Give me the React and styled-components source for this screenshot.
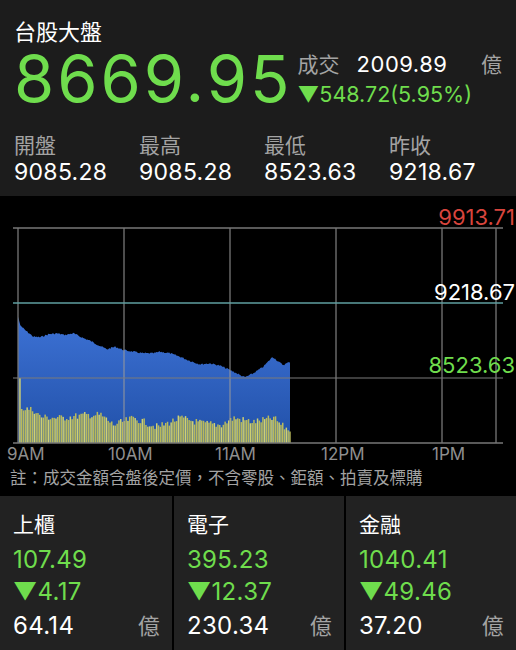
import React from "react";
import styled, { createGlobalStyle } from "styled-components";

const GREEN = "#6fdd4d";
const GRAY = "#a3a3a3";
const RED = "#d8453d";

const GlobalStyle = createGlobalStyle`
  body {
    margin: 0;
    background: #000;
    font-family: Inter, "Liberation Sans", "Noto Sans CJK TC", sans-serif;
  }
`;

const Page = styled.div`
  width: 516px;
  height: 650px;
  display: flex;
  flex-direction: column;
  background: #000;
  overflow: hidden;
`;

const Header = styled.div`
  height: 196px;
  box-sizing: border-box;
  padding: 16px 14px 0 14px;
  background: #1c1c1c;
  display: flex;
  flex-direction: column;
`;

const Title = styled.div`
  font-size: 22px;
  line-height: 28px;
  color: #fff;
  font-family: "Noto Sans CJK TC", sans-serif;
`;

const MainRow = styled.div`
  display: flex;
  align-items: flex-start;
  margin-top: 2px;
`;

const BigPrice = styled.div`
  font-size: 65px;
  line-height: 66px;
  color: ${GREEN};
  letter-spacing: 3px;
`;

const SideInfo = styled.div`
  flex: 1;
  display: flex;
  flex-direction: column;
  margin-left: 5px;
  padding-top: 2px;
`;

const TradeRow = styled.div`
  display: flex;
  align-items: baseline;
  line-height: 30px;
`;

const Label = styled.span`
  font-family: "Noto Sans CJK TC", sans-serif;
  font-size: ${({ size }) => size || 21}px;
  color: ${GRAY};
`;

const TradeValue = styled.span`
  flex: 1;
  margin-left: 17px;
  font-size: 22px;
  letter-spacing: 0.5px;
  color: #fff;
`;

const Change = styled.div`
  font-size: 21.5px;
  line-height: 30px;
  color: ${GREEN};
`;

const StatsGrid = styled.div`
  display: grid;
  grid-template-columns: repeat(4, 125px);
  margin-top: 18px;
`;

const Stat = styled.div`
  display: flex;
  flex-direction: column;
`;

const StatLabel = styled.div`
  font-family: "Noto Sans CJK TC", sans-serif;
  font-size: 21px;
  line-height: 28px;
  color: ${GRAY};
`;

const StatValue = styled.div`
  font-size: 23px;
  line-height: 28px;
  letter-spacing: 0.3px;
  color: #fff;
`;

const ChartSection = styled.div`
  height: 298px;
  display: flex;
  flex-direction: column;
  background: #000;
`;

const Note = styled.div`
  padding: 3px 0 0 10px;
  font-family: "Noto Sans CJK TC", sans-serif;
  font-size: 16.5px;
  line-height: 20px;
  color: ${GRAY};
`;

const Cards = styled.div`
  flex: 1;
  display: grid;
  grid-template-columns: 172px 1fr 1fr;
  gap: 2px;
  margin-top: 2px;
`;

const Card = styled.div`
  background: #222;
  padding: 11px 12px 0 13px;
  display: flex;
  flex-direction: column;
`;

const CardTitle = styled.div`
  font-family: "Noto Sans CJK TC", sans-serif;
  font-size: 21px;
  line-height: 33px;
  margin-bottom: 4px;
  color: #fff;
`;

const CardLine = styled.div`
  display: flex;
  justify-content: space-between;
  align-items: baseline;
  font-size: 24px;
  line-height: 32px;
  letter-spacing: 0.3px;
  color: ${({ green }) => (green ? GREEN : "#fff")};
`;

// ---- chart data ----
const TOP = 196;
const BASE = 443;

let seed = 7;
const rand = () => {
  seed = (seed * 9301 + 49297) % 233280;
  return seed / 233280;
};

const interp = (keys, x) => {
  for (let i = 0; i < keys.length - 1; i++) {
    const [x0, y0] = keys[i];
    const [x1, y1] = keys[i + 1];
    if (x >= x0 && x <= x1) return y0 + ((y1 - y0) * (x - x0)) / (x1 - x0);
  }
  return keys[keys.length - 1][1];
};

const priceKeys = [
  [18.3, 316.7], [20, 325], [25, 330], [33.3, 336.7], [40, 337.3], [48.3, 334.3],
  [56.7, 333.3], [65, 335], [73.3, 333.3], [81.7, 337.3], [90, 340.7], [98.3, 345],
  [106.7, 349.3], [115, 346.7], [123.3, 350], [133.3, 351.7], [143.3, 353.3],
  [153.3, 353.3], [160, 351.7], [170, 353.3], [180, 356.7], [190, 361], [200, 364.3],
  [210, 363.3], [220, 365.7], [230, 370], [240, 375], [245, 377.3], [253.3, 373.3],
  [263.3, 366.7], [272.7, 356.7], [278.3, 361.7], [283.3, 365], [290, 361.7],
];

const volKeys = [
  [20, 408], [33, 410], [40, 417], [60, 418], [85, 415], [100, 415], [113, 425],
  [133, 418], [157, 427], [180, 418], [200, 423], [220, 425], [233, 418], [253, 422],
  [273, 418], [283, 427], [290, 430],
];

const pricePoints = [];
for (let x = 18.3; x <= 290; x += 1) {
  const jitter = x < 21 ? 0 : (rand() - 0.5) * 1.6;
  pricePoints.push([x, interp(priceKeys, x) + jitter - TOP]);
}
pricePoints.push([290, interp(priceKeys, 290) - TOP]);
const areaPath =
  `M18.3 ${BASE - TOP} ` +
  pricePoints.map(([x, y]) => `L${x.toFixed(1)} ${y.toFixed(1)}`).join(" ") +
  ` L290 ${BASE - TOP} Z`;

const bars = [];
for (let x = 19.2; x < 289.5; x += 1.8) {
  const top = x < 20 ? 378 : interp(volKeys, x) + (rand() - 0.5) * 7;
  bars.push({ x, y: top - TOP, h: BASE - top });
}

const hours = [
  { x: 18, label: "9AM", lx: 7 },
  { x: 124, label: "10AM", lx: 108 },
  { x: 230, label: "11AM", lx: 215 },
  { x: 336, label: "12PM", lx: 321 },
  { x: 442, label: "1PM", lx: 432 },
];

const Chart = () => (
  <svg width="516" height="268" viewBox="0 0 516 268" style={{ display: "block" }}>
    <defs>
      <linearGradient id="area" x1="0" y1="0" x2="0" y2="1">
        <stop offset="0" stopColor="#3d72d5" />
        <stop offset="1" stopColor="#2150a8" />
      </linearGradient>
    </defs>
    <path d={areaPath} fill="url(#area)" />
    {bars.map((b, i) => (
      <rect key={i} x={b.x} y={b.y} width="1.5" height={b.h} fill={i % 4 === 0 ? "#cfd074" : "#b9ba5c"} />
    ))}
    {[...hours.map((h) => h.x), 496].map((x) => (
      <line key={x} x1={x} x2={x} y1={32} y2={BASE - TOP} stroke="#9a9a9a" strokeWidth="1" />
    ))}
    <line x1="13" x2="503" y1="32" y2="32" stroke="#777" strokeWidth="1.5" />
    <line x1="13" x2="503" y1="107" y2="107" stroke="#5f9fa0" strokeWidth="1.5" />
    <line x1="13" x2="503" y1="182" y2="182" stroke="#7a7a7a" strokeWidth="1" />
    <line x1="13" x2="503" y1={BASE - TOP} y2={BASE - TOP} stroke="#777" strokeWidth="1.5" />
    <g fontFamily="Inter, 'Liberation Sans', sans-serif" fontSize="22" textAnchor="end">
      <text x="515" y="29" fill={RED}>9913.71</text>
      <text x="515" y="104" fill="#fff">9218.67</text>
      <text x="515" y="177" fill={GREEN}>8523.63</text>
    </g>
    <g fontFamily="Inter, 'Liberation Sans', sans-serif" fontSize="17" fill="#8f8f8f">
      {hours.map((h) => (
        <text key={h.label} x={h.lx} y="264">{h.label}</text>
      ))}
    </g>
  </svg>
);

const stats = [
  { label: "開盤", value: "9085.28" },
  { label: "最高", value: "9085.28" },
  { label: "最低", value: "8523.63" },
  { label: "昨收", value: "9218.67" },
];

const sectors = [
  { name: "上櫃", price: "107.49", change: "4.17", volume: "64.14" },
  { name: "電子", price: "395.23", change: "12.37", volume: "230.34" },
  { name: "金融", price: "1040.41", change: "49.46", volume: "37.20" },
];

export default function App() {
  return (
    <Page>
      <GlobalStyle />
      <Header>
        <Title>台股大盤</Title>
        <MainRow>
          <BigPrice>8669.95</BigPrice>
          <SideInfo>
            <TradeRow>
              <Label>成交</Label>
              <TradeValue>2009.89</TradeValue>
              <Label>億</Label>
            </TradeRow>
            <Change>▼548.72(5.95%)</Change>
          </SideInfo>
        </MainRow>
        <StatsGrid>
          {stats.map((s) => (
            <Stat key={s.label}>
              <StatLabel>{s.label}</StatLabel>
              <StatValue>{s.value}</StatValue>
            </Stat>
          ))}
        </StatsGrid>
      </Header>
      <ChartSection>
        <Chart />
        <Note>註：成交金額含盤後定價，不含零股、鉅額、拍賣及標購</Note>
      </ChartSection>
      <Cards>
        {sectors.map((s) => (
          <Card key={s.name}>
            <CardTitle>{s.name}</CardTitle>
            <CardLine green>{s.price}</CardLine>
            <CardLine green>▼{s.change}</CardLine>
            <CardLine>
              {s.volume}
              <Label size={22}>億</Label>
            </CardLine>
          </Card>
        ))}
      </Cards>
    </Page>
  );
}
